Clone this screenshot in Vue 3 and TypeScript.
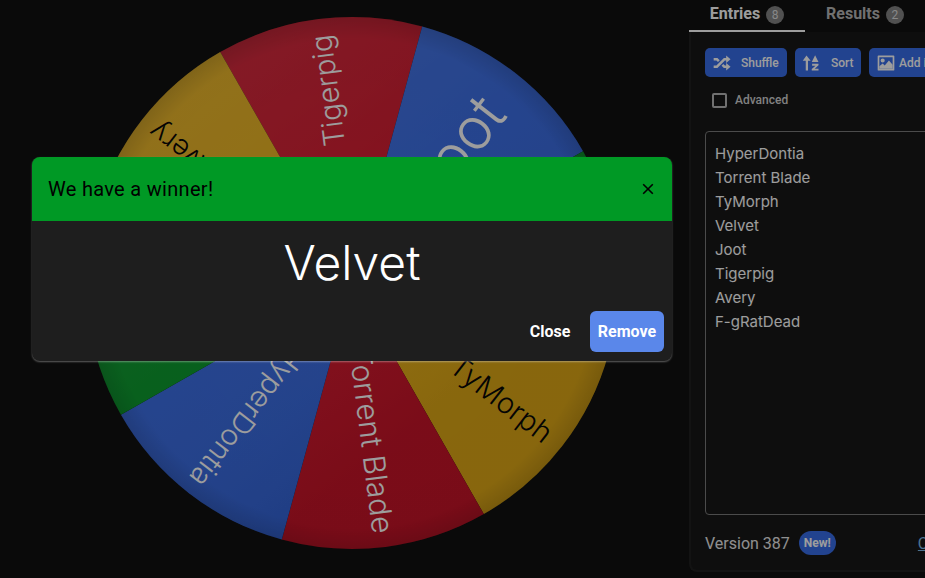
<script setup lang="ts">
const cx = 352
const cy = 283
const r = 266

const slices = [
  { name: 'Tigerpig', color: '#d50f25', ink: '#fff', size: 29, end: 250 },
  { name: 'Joot', color: '#3369e8', ink: '#fff', size: 58, end: 228 },
  { name: 'Velvet', color: '#009925', ink: '#fff', size: 44, end: 240 },
  { name: 'TyMorph', color: '#eeb211', ink: '#000', size: 29, end: 250 },
  { name: 'Torrent Blade', color: '#d50f25', ink: '#fff', size: 30, end: 252 },
  { name: 'HyperDontia', color: '#3369e8', ink: '#fff', size: 29, end: 254 },
  { name: 'F-gRatDead', color: '#009925', ink: '#fff', size: 28, end: 250 },
  { name: 'Avery', color: '#eeb211', ink: '#000', size: 28, end: 253 },
]

const point = (deg: number) => {
  const a = ((deg - 90) * Math.PI) / 180
  return `${cx + r * Math.cos(a)} ${cy + r * Math.sin(a)}`
}

const wedges = slices.map((s, i) => {
  const from = -29.7 + i * 45
  const mid = from + 22.5
  return {
    ...s,
    d: `M${cx} ${cy} L${point(from)} A${r} ${r} 0 0 1 ${point(from + 45)} Z`,
    transform: `rotate(${mid - 90} ${cx} ${cy})`,
  }
})

const entries = ['HyperDontia', 'Torrent Blade', 'TyMorph', 'Velvet', 'Joot', 'Tigerpig', 'Avery', 'F-gRatDead']
</script>

<template>
  <div class="page">
    <main class="stage">
      <svg class="wheel" width="689" height="578" viewBox="0 0 689 578">
        <defs>
          <radialGradient id="shade" :cx="cx" :cy="cy" :r="r" gradientUnits="userSpaceOnUse">
            <stop offset="0" stop-color="#000" stop-opacity="0" />
            <stop offset="0.92" stop-color="#000" stop-opacity="0.02" />
            <stop offset="1" stop-color="#000" stop-opacity="0.14" />
          </radialGradient>
          <linearGradient id="sheen" x1="0.15" y1="0" x2="0.7" y2="0.7">
            <stop offset="0" stop-color="#fff" stop-opacity="0.12" />
            <stop offset="0.6" stop-color="#fff" stop-opacity="0.03" />
            <stop offset="1" stop-color="#000" stop-opacity="0.06" />
          </linearGradient>
        </defs>
        <path v-for="w in wedges" :key="w.name" :d="w.d" :fill="w.color" />
        <circle :cx="cx" :cy="cy" :r="r" fill="url(#sheen)" />
        <circle :cx="cx" :cy="cy" :r="r" fill="url(#shade)" />
        <text
          v-for="w in wedges"
          :key="w.name + '-label'"
          :x="cx + w.end"
          :y="cy"
          :transform="w.transform"
          :fill="w.ink"
          :font-size="w.size"
          class="wheel-label"
          text-anchor="end"
          dominant-baseline="central"
        >{{ w.name }}</text>
      </svg>
    </main>

    <aside class="sidebar">
      <nav class="tabs">
        <div class="tab active">Entries <span class="count">8</span></div>
        <div class="tab second">Results <span class="count">2</span></div>
      </nav>
      <section class="panel">
        <div class="actions">
          <button class="action shuffle">
            <svg viewBox="0 0 24 24" width="20" height="20"><path fill="currentColor" d="M17,3L22.25,7.5L17,12L22.25,16.5L17,21V18H14.26L11.44,15.18L13.56,13.06L15.5,15H17V12L17,9H15.5L6.5,18H2V15H5.26L14.26,6H17V3M2,6H6.5L9.32,8.82L7.2,10.94L5.26,9H2V6Z" /></svg>
            <span>Shuffle</span>
          </button>
          <button class="action sort">
            <svg viewBox="0 0 24 24" width="18" height="18"><path fill="currentColor" d="M6 2l5.500 7H8v13H5V9H1zM17.500 1.500l4.500 9h-9zM13.500 13h8.500v2l-5 4.500h5V22h-9v-2l5-4.500h-4.500z" /></svg>
            <span>Sort</span>
          </button>
          <button class="action image">
            <svg viewBox="0 0 24 24" width="20" height="20"><path fill="currentColor" fill-rule="evenodd" d="M3 3h18a1 1 0 0 1 1 1v16a1 1 0 0 1-1 1H3a1 1 0 0 1-1-1V4a1 1 0 0 1 1-1zm1 2v14h16V5z" /><path fill="currentColor" d="M8 6.500a2.500 2.500 0 1 1 0 5 2.500 2.500 0 0 1 0-5zM4 19v-3l4-3.500 2.500 2.500 5-6L20 14v5z" /></svg>
            <span>Add image</span>
          </button>
        </div>
        <label class="advanced"><span class="box"></span>Advanced</label>
        <div class="entries">
          <div v-for="e in entries" :key="e">{{ e }}</div>
        </div>
        <footer class="foot">
          <span class="version">Version 387</span>
          <span class="new">New!</span>
          <a class="changelog">Changelog</a>
        </footer>
      </section>
    </aside>

    <div class="overlay">
      <div class="modal">
        <header class="modal-head">
          <span>We have a winner!</span>
          <svg viewBox="0 0 12 12" width="12" height="12"><path d="M1.200 1.200l9.600 9.600M10.800 1.200l-9.600 9.600" stroke="#000" stroke-width="1.600" fill="none" /></svg>
        </header>
        <div class="winner">Velvet</div>
        <div class="modal-foot">
          <button class="close">Close</button>
          <button class="remove">Remove</button>
        </div>
      </div>
    </div>
  </div>
</template>

<style>
body {
  background: #0a0a0a;
}
</style>

<style scoped>
.page {
  position: relative;
  display: flex;
  width: 925px;
  height: 578px;
  overflow: hidden;
  background: #0a0a0a;
  font-family: Roboto, sans-serif;
  color: #fff;
}
.stage {
  flex: 0 0 689px;
}
.wheel {
  display: block;
}
.wheel-label {
  font-family: Inter, sans-serif;
  font-weight: 300;
}
.sidebar {
  flex: 0 0 320px;
  display: flex;
  flex-direction: column;
  height: 572px;
}
.tabs {
  display: flex;
  height: 32px;
  flex: none;
}
.tab {
  width: 116px;
  height: 32px;
  padding-top: 4px;
  box-sizing: border-box;
  text-align: center;
  font-size: 16px;
  font-weight: 700;
  line-height: 20px;
  color: #b5b5b5;
}
.tab.active {
  color: #fff;
  border-bottom: 2px solid #fff;
}
.tab.second {
  margin-left: 2px;
}
.count {
  display: inline-block;
  width: 18px;
  height: 18px;
  margin-left: 2px;
  border-radius: 50%;
  background: #808080;
  font-size: 12px;
  line-height: 18px;
  font-weight: 400;
  color: #ddd;
}
.panel {
  flex: 1;
  display: flex;
  flex-direction: column;
  min-height: 0;
  padding: 16px 0 15px 14px;
  background: #121212;
  border: 1px solid #1a1a1a;
  border-width: 0 0 2px 2px;
  border-radius: 0 0 0 8px;
  box-sizing: border-box;
}
.actions {
  display: flex;
  gap: 8px;
}
.action {
  display: flex;
  align-items: center;
  flex: none;
  height: 29px;
  padding: 0 0 0 7px;
  border: 0;
  border-radius: 5px;
  background: #3369e8;
  color: #fff;
  font: 500 12px Roboto, sans-serif;
  white-space: nowrap;
}
.shuffle {
  width: 82px;
}
.shuffle svg {
  margin-right: 9px;
}
.sort {
  width: 66px;
}
.sort svg {
  margin-right: 11px;
}
.image svg {
  margin-right: 3px;
}
.advanced {
  display: flex;
  align-items: center;
  height: 16px;
  margin: 15px 0 0 7px;
  font-size: 12px;
  font-weight: 500;
  color: #d0d0d0;
}
.box {
  width: 11px;
  height: 11px;
  margin-right: 8px;
  border: 2px solid #b5b5b5;
  border-radius: 2px;
}
.entries {
  flex: 1;
  min-height: 0;
  margin-top: 23px;
  padding: 10px 9px 9px;
  border: 1px solid #777;
  border-radius: 4px;
  font-family: Inter, sans-serif;
  font-size: 15px;
  line-height: 24px;
  color: #fff;
}
.foot {
  display: flex;
  align-items: center;
  flex: none;
  height: 24px;
  margin-top: 16px;
  font-size: 16px;
  color: #e8e8e8;
  white-space: nowrap;
}
.new {
  margin-left: 9px;
  height: 24px;
  padding: 0 5px;
  border-radius: 12px;
  background: #3369e8;
  color: #fff;
  font-size: 12px;
  font-weight: 700;
  line-height: 24px;
}
.changelog {
  margin-left: 82px;
  color: #7ab8e8;
  text-decoration: underline;
}
.overlay {
  position: absolute;
  inset: 0;
  padding: 157px 0 0 32px;
  background: rgba(10, 10, 10, 0.4);
}
.modal {
  display: flex;
  flex-direction: column;
  width: 640px;
  height: 204px;
  border-radius: 8px;
  background: #1e1e1e;
  overflow: hidden;
  box-shadow: 0 1px 2px rgba(255, 255, 255, 0.35);
}
.modal-head {
  flex: none;
  display: flex;
  align-items: center;
  justify-content: space-between;
  height: 64px;
  padding: 0 18px 0 16px;
  background: #009925;
  color: #000;
  font-size: 20px;
  letter-spacing: 0.3px;
}
.winner {
  height: 84px;
  margin-bottom: 6px;
  text-align: center;
  font-family: Inter, sans-serif;
  font-weight: 300;
  font-size: 48px;
  line-height: 84px;
}
.modal-foot {
  display: flex;
  justify-content: flex-end;
  align-items: center;
  padding-right: 8px;
}
.modal-foot button {
  border: 0;
  border-radius: 6px;
  height: 41px;
  font: 700 16px Roboto, sans-serif;
  color: #fff;
}
.close {
  width: 80px;
  background: transparent;
}
.remove {
  width: 74px;
  background: #5a87ea;
}
</style>
